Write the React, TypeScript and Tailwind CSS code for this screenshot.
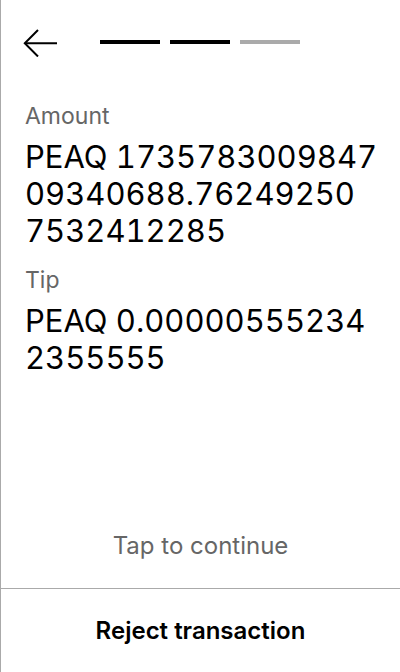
function Progress({ steps, current }: { steps: number; current: number }) {
  return (
    <div className="mt-[11px] flex gap-[10px]">
      {Array.from({ length: steps }).map((_, i) => (
        <div
          key={i}
          className={i < current ? "h-[4px] w-[60px] bg-black" : "h-[4px] w-[60px] bg-[#aaaaaa]"}
        />
      ))}
    </div>
  );
}

function Field({ label, lines }: { label: string; lines: string[] }) {
  return (
    <div className="flex flex-col">
      <div className="mb-[4px] text-[23px] leading-[36px] text-[#666666]">{label}</div>
      <div className="text-[31px] leading-[37px] text-black tabular-nums">
        {lines.map((l) => (
          <div key={l} className="whitespace-nowrap">
            {l}
          </div>
        ))}
      </div>
    </div>
  );
}

export default function App() {
  return (
    <div
      className="flex h-[672px] w-[400px] flex-col border-l border-[#aaaaaa] bg-white"
      style={{ fontFamily: "Inter, 'Noto Sans', sans-serif" }}
    >
      <div className="flex items-start gap-[43px] pl-[22px] pt-[29px]">
        <svg width="34" height="28" viewBox="0 0 34 28" fill="none" stroke="black" strokeWidth="2">
          <path d="M15 1 L1.8 14.3 L15 27.5" />
          <path d="M1.8 14.3 H34" />
        </svg>
        <Progress steps={3} current={2} />
      </div>

      <div className="flex flex-col gap-[13px] px-[24px] pt-[41px]">
        <Field label="Amount" lines={["PEAQ 1735783009847", "09340688.76249250", "7532412285"]} />
        <Field label="Tip" lines={["PEAQ 0.00000555234", "2355555"]} />
      </div>

      <div className="flex-1" />

      <div className="pb-[28px] text-center text-[24px] leading-[28px] text-[#666666]">
        Tap to continue
      </div>
      <button className="h-[84px] w-full border-t border-[#aaaaaa] text-[24px] font-semibold text-black">
        Reject transaction
      </button>
    </div>
  );
}
